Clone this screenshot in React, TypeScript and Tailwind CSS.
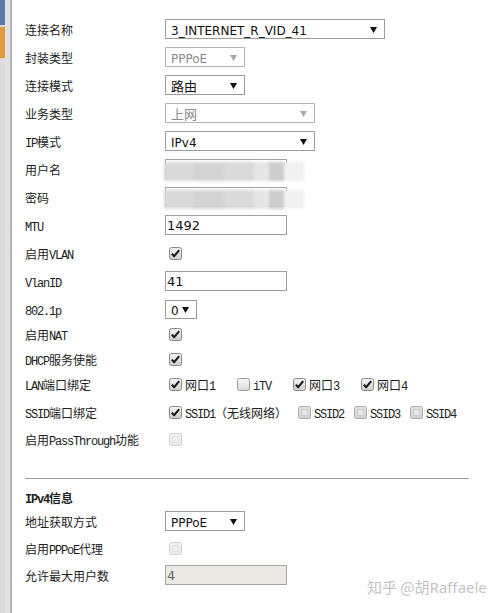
import React from "react";

const CJK = "font-['Noto_Sans_CJK_SC',sans-serif]";

function Mixed({ text, ascii = "font-['Liberation_Mono',monospace] text-[12px] tracking-[-1.2px]", cjk = "font-['Noto_Sans_CJK_SC',sans-serif] text-[12px]" }: { text: string; ascii?: string; cjk?: string }) {
  const parts = text.split(/([\x00-\x7F]+)/).filter((p) => p.length > 0);
  return (
    <>
      {parts.map((p, i) =>
        /^[\x00-\x7F]+$/.test(p) ? (
          <span key={i} className={ascii}>
            {p}
          </span>
        ) : (
          <span key={i} className={cjk}>
            {p}
          </span>
        )
      )}
    </>
  );
}

const CTRL_ASCII = "font-['DejaVu_Sans',sans-serif] text-[12px]";
const CTRL_CJK = "font-['Noto_Sans_CJK_SC',sans-serif] text-[13px]";

function Arrow({ disabled }: { disabled?: boolean }) {
  return (
    <svg width="7" height="7" viewBox="0 0 7 7" className="shrink-0">
      <polygon points="0,1 7,1 3.5,7" fill={disabled ? "#a8a8a8" : "#111"} />
    </svg>
  );
}

function Select({ value, w, disabled, h = "h-[20px]" }: { value: string; w: string; disabled?: boolean; h?: string }) {
  return (
    <div
      className={`${w} ${h} flex items-center justify-between border bg-white pl-[5px] pr-[7px] ${
        disabled ? "border-[#b4b4b4] text-[#8a8a8a]" : "border-[#9c9c9c] text-[#111]"
      }`}
    >
      <span className="leading-none whitespace-nowrap">
        <Mixed text={value} ascii={CTRL_ASCII} cjk={CTRL_CJK} />
      </span>
      <Arrow disabled={disabled} />
    </div>
  );
}

function Input({ value, disabled }: { value?: string; disabled?: boolean }) {
  return (
    <div
      className={`w-[122px] h-[20px] flex items-center border pl-[1px] ${
        disabled ? "bg-[#ebe9e3] border-[#a6a6a6] text-[#666]" : "bg-white border-[#a0a0a0] text-[#111]"
      }`}
    >
      <span className={`${CTRL_ASCII} text-[13px] leading-none`}>{value}</span>
    </div>
  );
}

function Blurred() {
  return (
    <div className="relative w-[122px] h-[20px] border border-[#a0a0a0] bg-white">
      <div className="absolute left-[-2px] top-[2px] w-[140px] h-[19px] blur-[1.5px] flex">
        <div className="w-[30px] h-full bg-[#d9d9d9]" />
        <div className="w-[30px] h-full bg-[#d4d4d4]" />
        <div className="w-[30px] h-full bg-[#dadada]" />
        <div className="w-[15px] h-full bg-[#e6e6e6]" />
        <div className="w-[15px] h-full bg-[#cdcdcd]" />
        <div className="w-[20px] h-full bg-[#f1f1f1]" />
      </div>
    </div>
  );
}

type CBState = "checked" | "unchecked" | "disabled" | "faint";

function CB({ state }: { state: CBState }) {
  const id = `g-${state}`;
  const cfg = {
    checked: { stroke: "#8a8a8a", a: "#f6f6f6", b: "#cdcdcd", inner: null as string | null },
    unchecked: { stroke: "#9a9a9a", a: "#fafafa", b: "#d8d8d8", inner: null as string | null },
    disabled: { stroke: "#ababab", a: "#e4e4e4", b: "#d2d2d2", inner: "#e9e9e9" },
    faint: { stroke: "#d2d2d2", a: "#f3f3f3", b: "#e8e8e8", inner: "#eeeeee" },
  }[state];
  return (
    <svg width="13" height="13" viewBox="0 0 13 13" className="shrink-0">
      <defs>
        <linearGradient id={id} x1="0" y1="0" x2="0" y2="1">
          <stop offset="0" stopColor={cfg.a} />
          <stop offset="1" stopColor={cfg.b} />
        </linearGradient>
      </defs>
      <rect x="0.5" y="0.5" width="12" height="12" rx="2" fill={`url(#${id})`} stroke={cfg.stroke} />
      {cfg.inner && <rect x="3.5" y="3.5" width="6" height="6" fill={cfg.inner} stroke={state === "disabled" ? "#c4c4c4" : "#e0e0e0"} strokeWidth="0.8" />}
      {state === "checked" && <path d="M2.8 6.6 L5.2 9.2 L10.2 3.2" stroke="#1a1a1a" strokeWidth="2.1" fill="none" strokeLinejoin="round" />}
    </svg>
  );
}

function CBItem({ state, label }: { state: CBState; label: string }) {
  return (
    <div className="flex items-center gap-[3px] text-[#222]">
      <CB state={state} />
      <span className="leading-none whitespace-nowrap">
        <Mixed text={label} />
      </span>
    </div>
  );
}

function Row({ label, h = "h-[28px]", children, bold }: { label: string; h?: string; children?: React.ReactNode; bold?: boolean }) {
  return (
    <div className={`flex items-center ${h}`}>
      <div className={`w-[140px] shrink-0 text-[#222] leading-none whitespace-nowrap ${bold ? "font-bold" : ""}`}>
        <Mixed text={label} />
      </div>
      <div className="flex items-center">{children}</div>
    </div>
  );
}

export default function App() {
  return (
    <div className="relative flex w-[498px] h-[613px] bg-white overflow-hidden">
      {/* left sidebar strip */}
      <div className="w-[12px] h-full flex shrink-0">
        <div className="w-[5px] h-full bg-[#dcdcdc] flex flex-col">
          <div className="h-[25px] bg-[#5b7aa8]" />
          <div className="h-[2px] bg-[#d8d8d8]" />
          <div className="h-[31px] bg-[#e39a3c]" />
        </div>
        <div className="w-[5px] h-full bg-[#e2e2e2]" />
        <div className="w-[2px] h-full bg-[#b3b3b3]" />
      </div>

      <div className="flex-1 pl-[13px] pt-[15px] flex flex-col">
        <Row label="连接名称">
          <Select value="3_INTERNET_R_VID_41" w="w-[220px]" />
        </Row>
        <Row label="封装类型">
          <Select value="PPPoE" w="w-[80px]" disabled />
        </Row>
        <Row label="连接模式">
          <Select value="路由" w="w-[80px]" />
        </Row>
        <Row label="业务类型">
          <Select value="上网" w="w-[150px]" disabled />
        </Row>
        <Row label="IP模式">
          <Select value="IPv4" w="w-[150px]" />
        </Row>
        <Row label="用户名">
          <Blurred />
        </Row>
        <Row label="密码">
          <Blurred />
        </Row>
        <Row label="MTU">
          <Input value="1492" />
        </Row>
        <Row label="启用VLAN">
          <div className="pl-[4px] flex">
            <CB state="checked" />
          </div>
        </Row>
        <Row label="VlanID">
          <Input value="41" />
        </Row>
        <Row label="802.1p">
          <Select value="0" w="w-[32px]" h="h-[19px]" />
        </Row>
        <Row label="启用NAT" h="h-[23px]">
          <div className="pl-[4px] flex">
            <CB state="checked" />
          </div>
        </Row>
        <Row label="DHCP服务使能" h="h-[26px]">
          <div className="pl-[4px] flex">
            <CB state="checked" />
          </div>
        </Row>
        <Row label="LAN端口绑定" h="h-[24px]">
          <div className="pl-[4px] flex items-center gap-[22px]">
            <CBItem state="checked" label="网口1" />
            <CBItem state="unchecked" label="iTV" />
            <CBItem state="checked" label="网口3" />
            <CBItem state="checked" label="网口4" />
          </div>
        </Row>
        <Row label="SSID端口绑定" h="h-[32px]">
          <div className="pl-[4px] flex items-center gap-[10px]">
            <div className="mr-[1px]">
              <CBItem state="checked" label="SSID1（无线网络）" />
            </div>
            <CBItem state="disabled" label="SSID2" />
            <CBItem state="disabled" label="SSID3" />
            <CBItem state="disabled" label="SSID4" />
          </div>
        </Row>
        <Row label="启用PassThrough功能" h="h-[22px]">
          <div className="pl-[4px] flex">
            <CB state="faint" />
          </div>
        </Row>

        <div className="mt-[28px] w-[444px] h-[1px] bg-[#9a9a9a]" />

        <div className="mt-[8px] h-[20px] flex items-center">
          <span className="font-bold text-[#222] leading-none">
            <Mixed
              text="IPv4信息"
              ascii="font-['Liberation_Mono',monospace] text-[12px] tracking-[-1.2px] font-bold"
              cjk="font-['Noto_Sans_CJK_SC',sans-serif] text-[12px] font-bold"
            />
          </span>
        </div>
        <Row label="地址获取方式">
          <Select value="PPPoE" w="w-[80px]" />
        </Row>
        <Row label="启用PPPoE代理" h="h-[26px]">
          <div className="pl-[4px] flex">
            <CB state="faint" />
          </div>
        </Row>
        <Row label="允许最大用户数">
          <Input value="4" disabled />
        </Row>
      </div>

      <div className={`absolute left-[367px] top-[579px] text-[15px] leading-none text-[#c4c4c4] whitespace-nowrap ${CJK}`}>
        知乎 @胡<span className="font-['Noto_Sans',sans-serif]">Raffaele</span>
      </div>
    </div>
  );
}
